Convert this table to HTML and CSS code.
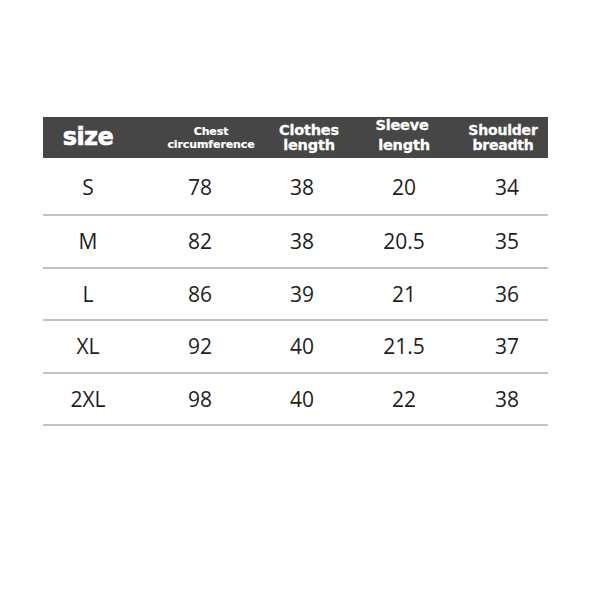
FILE: index.html
```html
<!DOCTYPE html>
<html>
<head>
<meta charset="utf-8">
<link rel="stylesheet" href="styles.css">
</head>
<body>
<div class="chart">
  <div class="head">
    <div class="hc c1"><span class="size">size</span></div>
    <div class="hc c2 chest"><span>Chest</span><span>circumference</span></div>
    <div class="hc c3 clothes"><span>Clothes</span><span>length</span></div>
    <div class="hc c4 sleeve"><span>Sleeve</span><span class="low">length</span></div>
    <div class="hc c5 shoulder"><span>Shoulder</span><span>breadth</span></div>
  </div>
  <div class="row first">
    <div class="c1">S</div><div class="c2">78</div><div class="c3">38</div><div class="c4">20</div><div class="c5">34</div>
  </div>
  <div class="row">
    <div class="c1">M</div><div class="c2">82</div><div class="c3">38</div><div class="c4">20.5</div><div class="c5">35</div>
  </div>
  <div class="row">
    <div class="c1">L</div><div class="c2">86</div><div class="c3">39</div><div class="c4">21</div><div class="c5">36</div>
  </div>
  <div class="row">
    <div class="c1">XL</div><div class="c2">92</div><div class="c3">40</div><div class="c4">21.5</div><div class="c5">37</div>
  </div>
  <div class="row">
    <div class="c1">2XL</div><div class="c2">98</div><div class="c3">40</div><div class="c4">22</div><div class="c5">38</div>
  </div>
</div>
</body>
</html>
```
FILE: styles.css
```css
html, body {
  margin: 0;
  padding: 0;
  background: #ffffff;
}
.chart {
  margin: 117px 0 0 43px;
  width: 505px;
}
.head, .row {
  display: grid;
  grid-template-columns: 106px 102px 102px 102px 93px;
}
.head {
  height: 41px;
  background: #464646;
  color: #ffffff;
  font-family: "DejaVu Sans", sans-serif;
  font-weight: bold;
}
.hc {
  display: flex;
  flex-direction: column;
  align-items: center;
  justify-content: center;
  white-space: nowrap;
}
.head .c1 {
  padding-right: 16px;
}
.size {
  font-size: 24px;
  letter-spacing: -0.6px;
  line-height: 1;
  margin-top: -1px;
  -webkit-text-stroke: 0.6px #ffffff;
}
.chest {
  font-size: 11px;
  line-height: 13px;
  padding-left: 22px;
  letter-spacing: -0.1px;
  -webkit-text-stroke: 0.2px #ffffff;
}
.clothes {
  font-size: 14.5px;
  line-height: 15px;
  padding-left: 14px;
  letter-spacing: -0.2px;
  -webkit-text-stroke: 0.3px #ffffff;
}
.sleeve {
  font-size: 14.5px;
  line-height: 15px;
  padding-right: 4px;
  letter-spacing: -0.2px;
  -webkit-text-stroke: 0.3px #ffffff;
}
.sleeve span:first-child {
  margin-top: -5px;
}
.sleeve .low {
  margin-top: 5px;
  margin-left: 4px;
}
.shoulder {
  font-size: 14px;
  line-height: 15px;
  padding-left: 3px;
  letter-spacing: -0.2px;
  -webkit-text-stroke: 0.3px #ffffff;
}
.row {
  height: 50.5px;
  border-bottom: 2px solid #c2c2c2;
  align-items: center;
  font-family: "Open Sans", sans-serif;
  font-size: 21px;
  color: #1e1e1e;
}
.row.first {
  height: 54px;
  padding-top: 2px;
}
.row > div {
  text-align: center;
}
.row .c1 {
  padding-right: 16px;
}
.row .c5 {
  padding-left: 11px;
}
```
